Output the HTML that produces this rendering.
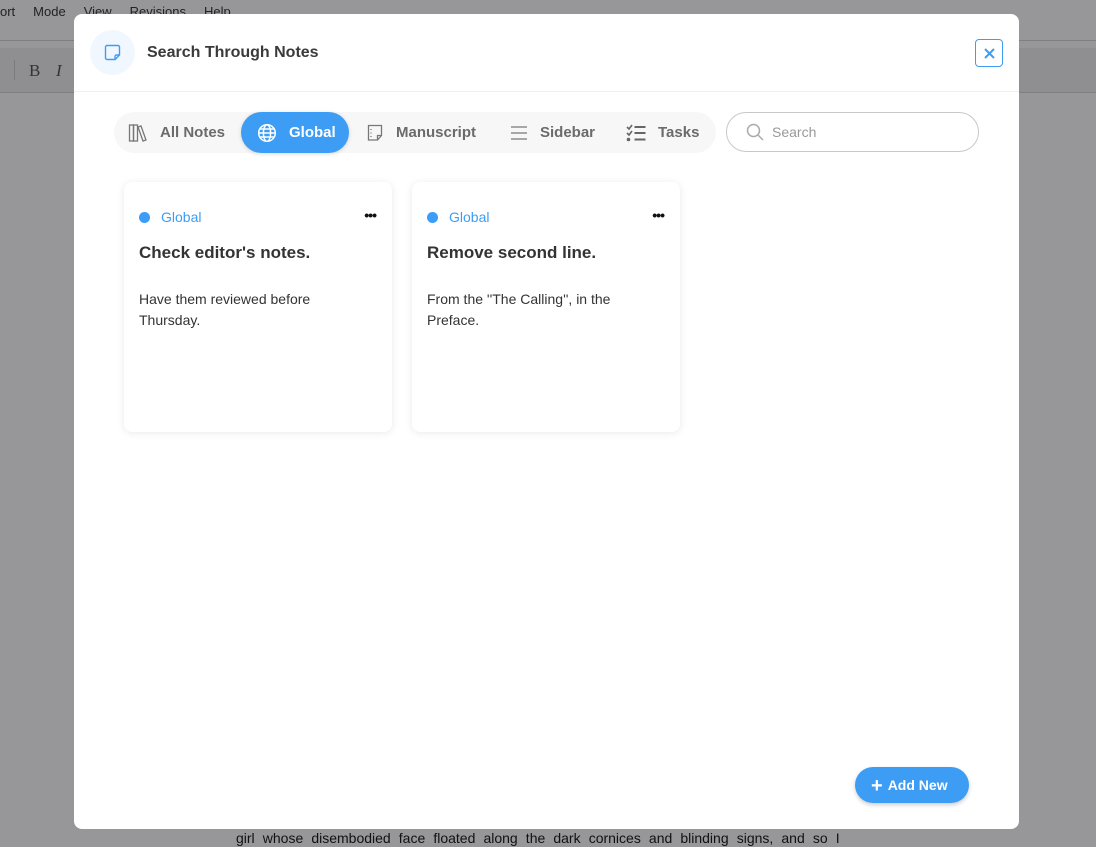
<!DOCTYPE html>
<html><head><style>
*{box-sizing:border-box;margin:0;padding:0}
body{width:1096px;height:847px;background:#97979a;font-family:"Liberation Sans",sans-serif;position:relative;overflow:hidden}
.abs{position:absolute}
.menu{top:4px;left:0;font-size:13px;color:#222;white-space:nowrap}
.menu span{margin-right:18px}
.modal{left:74px;top:14px;width:945px;height:815px;background:#fff;border-radius:8px}
.tab{position:absolute;top:0;height:41px;display:flex;align-items:center;font-size:15px;font-weight:bold;color:#6b6b6b}
.tab svg{margin-right:12px}
.card{position:absolute;top:168px;width:268px;height:250px;background:#fff;border-radius:8px;box-shadow:0 1px 8px rgba(0,0,0,0.09)}
.card .tag{position:absolute;left:15px;top:27px;font-size:14px;color:#3d9df5;display:flex;align-items:center}
.card .tag i{width:11px;height:11px;border-radius:50%;background:#3d9df5;margin-right:11px;display:inline-block}
.card .dots{position:absolute;right:16px;top:25px;font-size:14px;font-weight:bold;letter-spacing:-1px;color:#111}
.card h3{position:absolute;left:15px;top:61px;font-size:17px;color:#333;font-weight:bold}
.card p{position:absolute;left:15px;top:107px;width:220px;font-size:14px;line-height:21px;color:#333}
</style></head><body>
<div class="abs" style="top:40px;left:0;width:1096px;height:1px;background:#7f7f82"></div>
<div class="abs" style="top:48px;left:0;width:1096px;height:44px;background:#8f8f92"></div>
<div class="abs" style="top:92px;left:0;width:1096px;height:1px;background:#7f7f82"></div>
<div class="abs menu"><span>ort</span><span>Mode</span><span>View</span><span>Revisions</span><span>Help</span></div>
<div class="abs" style="left:14px;top:60px;width:1px;height:20px;background:#7a7a7a"></div>
<div class="abs" style="left:29px;top:61px;font-family:'Liberation Serif',serif;font-size:17px;color:#333">B</div>
<div class="abs" style="left:56px;top:61px;font-family:'Liberation Serif',serif;font-style:italic;font-size:17px;color:#333">I</div>
<div class="abs" style="left:236px;top:829px;font-size:14px;color:#111;line-height:18px;word-spacing:4.2px">girl whose disembodied face floated along the dark cornices and blinding signs, and so I</div>

<div class="abs modal">
  <div class="abs" style="left:16px;top:16px;width:45px;height:45px;border-radius:50%;background:#f0f7fe"></div>
  <svg class="abs" style="left:30px;top:30px" width="17" height="17" viewBox="0 0 17 17" fill="none" stroke="#3d9df5" stroke-width="1.4"><path d="M3 1.5h11a1.5 1.5 0 0 1 1.5 1.5v8l-4.5 4.5H3A1.5 1.5 0 0 1 1.5 14V3A1.5 1.5 0 0 1 3 1.5z"/><path d="M15.5 11h-3a1.5 1.5 0 0 0-1.5 1.5v3"/></svg>
  <div class="abs" style="left:73px;top:30px;font-size:16px;font-weight:bold;color:#3a3a3a">Search Through Notes</div>
  <div class="abs" style="left:901px;top:25px;width:28px;height:28px;border:1px solid #3d9df5;border-radius:4px">
    <svg class="abs" style="left:8px;top:8px" width="11" height="11" viewBox="0 0 11 11" stroke="#3d9df5" stroke-width="2"><path d="M1 1l9 9M10 1l-9 9"/></svg>
  </div>
  <div class="abs" style="left:0;top:77px;width:945px;height:1px;background:#f0f0f0"></div>

  <div class="abs" style="left:40px;top:98px;width:602px;height:41px;background:#f7f7f7;border-radius:21px">
    <div class="tab" style="left:14px"><svg width="20" height="20" viewBox="0 0 20 20" fill="none" stroke="#777" stroke-width="1.3"><rect x="1.5" y="2" width="4" height="16"/><rect x="5.5" y="2" width="4" height="16"/><path d="M10 4l3-1 5 14-3 1z"/></svg>All Notes</div>
    <div class="tab" style="left:127px;width:108px;background:#3d9df5;border-radius:21px;color:#fff;padding-left:16px;box-shadow:0 1px 4px rgba(0,0,0,0.15)"><svg width="20" height="20" viewBox="0 0 20 20" fill="none" stroke="#fff" stroke-width="1.5"><circle cx="10" cy="10" r="8.3"/><ellipse cx="10" cy="10" rx="3.6" ry="8.3"/><path d="M1.7 10h16.6M3 6h14M3 14h14"/></svg>Global</div>
    <div class="tab" style="left:252px"><svg width="18" height="18" viewBox="0 0 18 18" fill="none" stroke="#777" stroke-width="1.3"><path d="M2.5 1.5h13v10l-4 4.5h-9z"/><path d="M15.5 11.5h-4v4.5"/><path d="M5 5v1M5 8.5v1M5 12v1"/></svg>Manuscript</div>
    <div class="tab" style="left:396px"><svg width="18" height="16" viewBox="0 0 18 16" fill="none" stroke="#777" stroke-width="1.3"><path d="M1 2h16M1 8h16M1 14h16"/></svg>Sidebar</div>
    <div class="tab" style="left:512px"><svg width="20" height="18" viewBox="0 0 20 18" fill="none" stroke="#666" stroke-width="1.6"><path d="M1 3l2 2 3-4M1 9l2 2 3-4"/><circle cx="2.5" cy="15.5" r="1" fill="#666"/><path d="M8.5 3h11M8.5 9h11M8.5 15.5h11" stroke-width="2"/></svg>Tasks</div>
  </div>
  <div class="abs" style="left:652px;top:98px;width:253px;height:40px;border:1px solid #c8c8c8;border-radius:20px">
    <svg class="abs" style="left:19px;top:10px" width="18" height="18" viewBox="0 0 18 18" fill="none" stroke="#aaa" stroke-width="1.5"><circle cx="7.5" cy="7.5" r="6"/><path d="M12 12l5 5"/></svg>
    <div class="abs" style="left:45px;top:11px;font-size:14px;color:#999">Search</div>
  </div>

  <div class="card" style="left:50px"><div class="tag"><i></i>Global</div><div class="dots">•••</div><h3>Check editor's notes.</h3><p>Have them reviewed before Thursday.</p></div>
  <div class="card" style="left:338px"><div class="tag"><i></i>Global</div><div class="dots">•••</div><h3>Remove second line.</h3><p>From the ''The Calling'', in the Preface.</p></div>

  <div class="abs" style="left:781px;top:753px;width:114px;height:36px;background:#3d9df5;border-radius:18px;color:#fff;font-size:14px;font-weight:bold;line-height:36px;padding-left:16px;box-shadow:0 2px 4px rgba(0,0,0,0.2)"><span style="font-size:20px;vertical-align:-2px;margin-right:5px">+</span>Add New</div>
</div>
</body></html>
